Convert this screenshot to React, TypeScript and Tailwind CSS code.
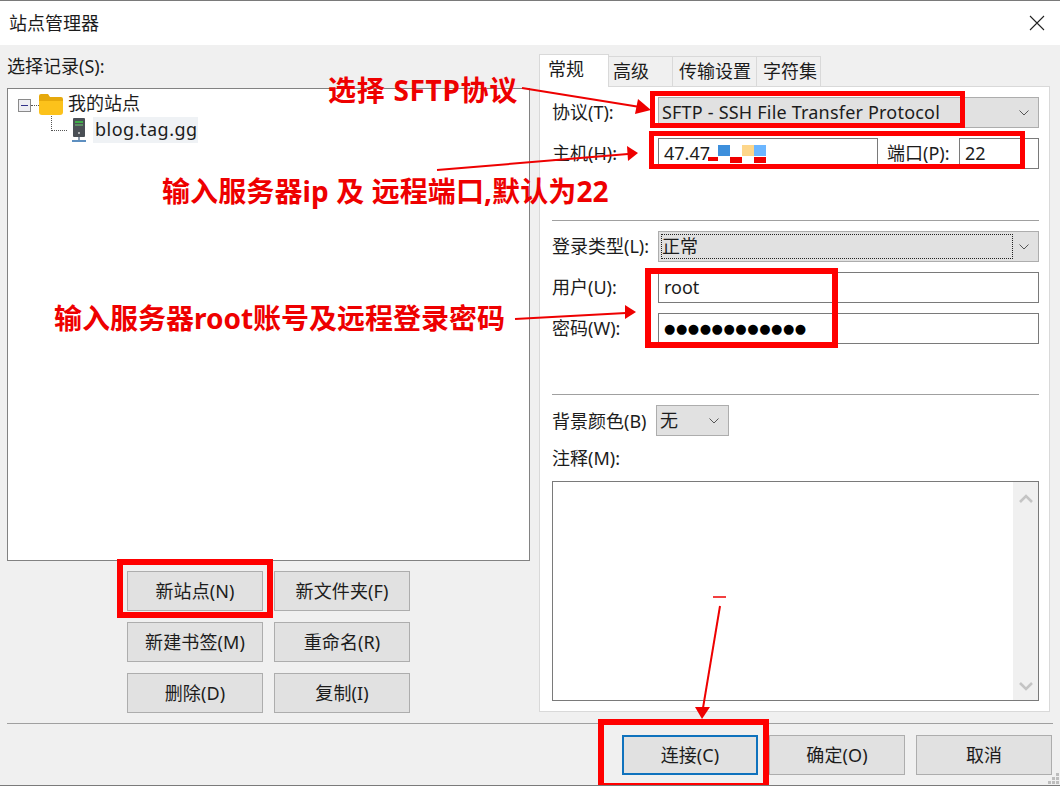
import React from "react";

const Chevron = ({ className = "" }: { className?: string }) => (
  <svg width="12" height="8" viewBox="0 0 12 8" className={className} fill="none" stroke="#555" strokeWidth="1">
    <path d="M1.5 1.5 L6 6 L10.5 1.5" />
  </svg>
);

const Btn = ({ label, focus }: { label: string; focus?: boolean }) => (
  <div
    className={
      "h-10 w-[136px] flex items-center justify-center bg-[#e1e1e1] tracking-[0.1px] " +
      (focus ? "border-2 border-[#0f72bd]" : "border border-[#adadad]")
    }
  >
    {label}
  </div>
);

const Select = ({ text, w, dotted }: { text: string; w: string; dotted?: boolean }) => (
  <div className={"h-[31px] bg-[#e1e1e1] border border-[#adadad] flex items-center relative " + w}>
    <div
      className={
        "flex-1 flex items-center pb-[2px] " +
        (dotted ? "m-[2px] h-[25px] border border-dotted border-[#222]" : "h-full pl-[3px]")
      }
    >
      {text}
    </div>
    <Chevron className="mr-[8px] ml-[3px]" />
  </div>
);

const Input = ({ children, w }: { children?: React.ReactNode; w: string }) => (
  <div className={"h-[31px] bg-white border border-[#7a7a7a] flex items-center pl-[5px] pb-[2px] " + w}>{children}</div>
);

const Row = ({ label, children, className = "" }: { label: string; children: React.ReactNode; className?: string }) => (
  <div className={"flex items-center " + className}>
    <div className="w-[106px] shrink-0 pb-[2px]">{label}</div>
    {children}
  </div>
);

const Tab = ({ label, w }: { label: string; w: string }) => (
  <div className={"h-[30px] bg-[#f0f0f0] border border-b-0 border-[#d9d9d9] -ml-px flex items-center pb-[2px] " + w}>
    {label}
  </div>
);

const RedBox = ({ className }: { className: string }) => (
  <div className={"absolute border-[#ff0000] pointer-events-none " + className} />
);

const Note = ({ className, children }: { className: string; children: React.ReactNode }) => (
  <div className={"absolute whitespace-nowrap font-bold text-[#ee0000] text-[28px] leading-none " + className}>
    {children}
  </div>
);

export default function App() {
  return (
    <div className="relative w-[1060px] h-[786px] overflow-hidden bg-[#f0f0f0] text-[#1c1c1c] text-[18px] leading-none font-['Noto_Sans','Noto_Sans_CJK_SC',sans-serif] border-t border-b border-[#7a7a7a] box-border">
      {/* title bar */}
      <div className="h-[44px] bg-white flex items-center justify-between pl-[9px] pr-[15px]">
        <span>站点管理器</span>
        <svg width="16" height="16" viewBox="0 0 16 16" stroke="#222" strokeWidth="1.1" fill="none">
          <path d="M1 1 L15 15 M15 1 L1 15" />
        </svg>
      </div>

      <div className="flex h-[678px]">
        {/* left column */}
        <div className="w-[539px] shrink-0 pl-[7px] flex flex-col">
          <div className="h-[43px] flex items-end pb-[13px]">选择记录(S):</div>
          <div className="w-[523px] h-[473px] bg-white border border-[#828282] relative pt-[2px]">
            <div className="flex items-center h-[26px] pl-[10px]">
              <div className="w-[13px] h-[13px] border border-[#8a8a8a] bg-[#eeeef2] flex items-center justify-center mt-[3px]">
                <div className="w-[7px] h-px bg-[#33338a]" />
              </div>
              <div className="w-[8px] border-t border-dotted border-[#555] mt-[3px]" />
              <svg width="24" height="21" viewBox="0 0 24 21" className="shrink-0">
                <path d="M0 2 Q0 0 2 0 H9 L11 3 H22 Q24 3 24 5 V7 H0 Z" fill="#e6a90c" />
                <path d="M0 7 H24 V18 Q24 21 21 21 H3 Q0 21 0 18 Z" fill="#fcc21b" />
              </svg>
              <span className="ml-[5px] pb-[2px]">我的站点</span>
            </div>
            <div className="flex items-center h-[26px] pl-[63px]">
              <svg width="16" height="25" viewBox="0 0 16 25" className="shrink-0">
                <rect x="2" y="0" width="12" height="19" rx="1" fill="#4a4f55" />
                <rect x="4" y="3" width="8" height="2" fill="#3fae49" />
                <rect x="4" y="6" width="8" height="2" fill="#5d8f64" />
                <circle cx="8" cy="15" r="1" fill="#d5d5d5" />
                <rect x="7" y="19" width="2" height="3" fill="#8a98a8" />
                <rect x="1" y="22" width="14" height="2" fill="#5d8fc0" />
              </svg>
              <span className="ml-[6px] h-[26px] w-[105px] pl-[2px] pb-[2px] bg-[#eff2f5] flex items-center tracking-[0.5px]">blog.tag.gg</span>
            </div>
            <div className="absolute left-[43px] top-[27px] h-[15px] w-[16px] border-l border-b border-dotted border-[#555]" />
          </div>
          <div className="ml-[120px] mt-[10px] grid grid-cols-[136px_136px] gap-x-[11px] gap-y-[11px]">
            <Btn label="新站点(N)" />
            <Btn label="新文件夹(F)" />
            <Btn label="新建书签(M)" />
            <Btn label="重命名(R)" />
            <Btn label="删除(D)" />
            <Btn label="复制(I)" />
          </div>
        </div>

        {/* right column */}
        <div className="w-[511px] pt-[9px] flex flex-col">
          <div className="flex items-end h-[32px] relative z-10">
            <div className="h-[33px] w-[70px] bg-white border border-b-0 border-[#d9d9d9] flex items-center pl-[8px] pb-[5px] -mb-px">常规</div>
            <Tab label="高级" w="w-[65px] pl-[4px]" />
            <Tab label="传输设置" w="w-[85px] pl-[6px]" />
            <Tab label="字符集" w="w-[65px] pl-[6px]" />
          </div>
          <div className="h-[626px] bg-white border border-[#d9d9d9] pl-[12px] pr-[10px] pt-[10px] flex flex-col">
            <Row label="协议(T):">
              <Select text="SFTP - SSH File Transfer Protocol" w="w-[381px] tracking-[0.2px]" />
            </Row>
            <Row label="主机(H):" className="mt-[10px]">
              <Input w="w-[220px]">47.47</Input>
              <div className="w-[81px] pl-[9px] pb-[2px]">端口(P):</div>
              <Input w="w-[80px]">22</Input>
            </Row>
            <div className="h-px bg-[#a0a0a0] mt-[51px]" />
            <Row label="登录类型(L):" className="mt-[10px]">
              <Select text="正常" w="w-[381px]" dotted />
            </Row>
            <Row label="用户(U):" className="mt-[10px]">
              <Input w="w-[381px]">root</Input>
            </Row>
            <Row label="密码(W):" className="mt-[10px]">
              <Input w="w-[381px]">
                <span className="text-[#000] text-[13px] tracking-[0.55px] pt-[2px] font-['DejaVu_Sans',sans-serif]">●●●●●●●●●●●●</span>
              </Input>
            </Row>
            <div className="h-px bg-[#a0a0a0] mt-[50px]" />
            <div className="flex items-center mt-[10px]">
              <div className="w-[104px] shrink-0">背景颜色(B)</div>
              <Select text="无" w="w-[73px]" />
            </div>
            <div className="mt-[6px] h-[31px] flex items-center">注释(M):</div>
            <div className="h-[220px] w-[487px] mt-[8px] bg-white border border-[#7a7a7a] flex justify-end">
              <div className="w-[25px] h-full bg-[#f0f0f0] flex flex-col items-center justify-between pt-[11px] pb-[8px]">
                <svg width="16" height="10" viewBox="0 0 16 10" fill="none" stroke="#c4c4c4" strokeWidth="2.6">
                  <path d="M2 9 L8 3 L14 9" />
                </svg>
                <svg width="16" height="10" viewBox="0 0 16 10" fill="none" stroke="#c4c4c4" strokeWidth="2.6">
                  <path d="M2 1 L8 7 L14 1" />
                </svg>
              </div>
            </div>
          </div>
        </div>
      </div>

      {/* footer */}
      <div className="mx-[7px] h-px bg-[#a0a0a0]" />
      <div className="flex justify-end gap-[11px] pr-[8px] pt-[11px]">
        <Btn label="连接(C)" focus />
        <Btn label="确定(O)" />
        <Btn label="取消" />
      </div>

      {/* grip */}
      <div className="absolute right-[1px] bottom-[1px] grid grid-cols-3 gap-[1px]">
        <span /><span /><span className="w-[3px] h-[3px] bg-[#bdbdbd]" />
        <span /><span className="w-[3px] h-[3px] bg-[#bdbdbd]" /><span className="w-[3px] h-[3px] bg-[#bdbdbd]" />
        <span className="w-[3px] h-[3px] bg-[#bdbdbd]" /><span className="w-[3px] h-[3px] bg-[#bdbdbd]" /><span className="w-[3px] h-[3px] bg-[#bdbdbd]" />
      </div>

      {/* mosaic over host */}
      <div className="absolute left-[718px] top-[144px] w-[12px] h-[11px] bg-[#3d8fdc]" />
      <div className="absolute left-[742px] top-[144px] w-[12px] h-[11px] bg-[#fdd68a]" />
      <div className="absolute left-[754px] top-[144px] w-[12px] h-[11px] bg-[#6cb6ff]" />
      <div className="absolute left-[708px] top-[156px] w-[10px] h-[4px] bg-[#ee0000]" />
      <div className="absolute left-[730px] top-[156px] w-[12px] h-[6px] bg-[#ee0000]" />
      <div className="absolute left-[754px] top-[156px] w-[12px] h-[6px] bg-[#ee0000]" />

      {/* annotations */}
      <RedBox className="left-[650px] top-[90px] w-[315px] h-[37px] border-[5px]" />
      <RedBox className="left-[649px] top-[130px] w-[376px] h-[38px] border-[5px]" />
      <RedBox className="left-[645px] top-[267px] w-[193px] h-[80px] border-[6px]" />
      <RedBox className="left-[117px] top-[558px] w-[156px] h-[59px] border-[6px]" />
      <RedBox className="left-[598px] top-[718px] w-[171px] h-[70px] border-[6px]" />

      <Note className="left-[328px] top-[75px] tracking-[0.7px]">选择 SFTP协议</Note>
      <Note className="left-[162px] top-[176px] tracking-[0.1px]">输入服务器ip 及 远程端口,默认为22</Note>
      <Note className="left-[54px] top-[303px]">输入服务器root账号及远程登录密码</Note>

      <svg className="absolute left-0 top-[-1px] pointer-events-none" width="1060" height="786" viewBox="0 0 1060 786" fill="none">
        <g stroke="#ee0000" strokeWidth="2">
          <path d="M522 88 L640 107" />
          <path d="M437 170 L628 154" />
          <path d="M515 319 L626 313" />
          <path d="M720 606 L703 708" />
          <path d="M713 597 H726" strokeWidth="1.5" />
        </g>
        <g fill="#ee0000">
          <path d="M651 110 L638 99 L635 114 Z" />
          <path d="M638 153 L627 146 L628 161 Z" />
          <path d="M636 312 L625 305 L625 319 Z" />
          <path d="M702 719 L695 707 L710 707 Z" />
        </g>
      </svg>
    </div>
  );
}
